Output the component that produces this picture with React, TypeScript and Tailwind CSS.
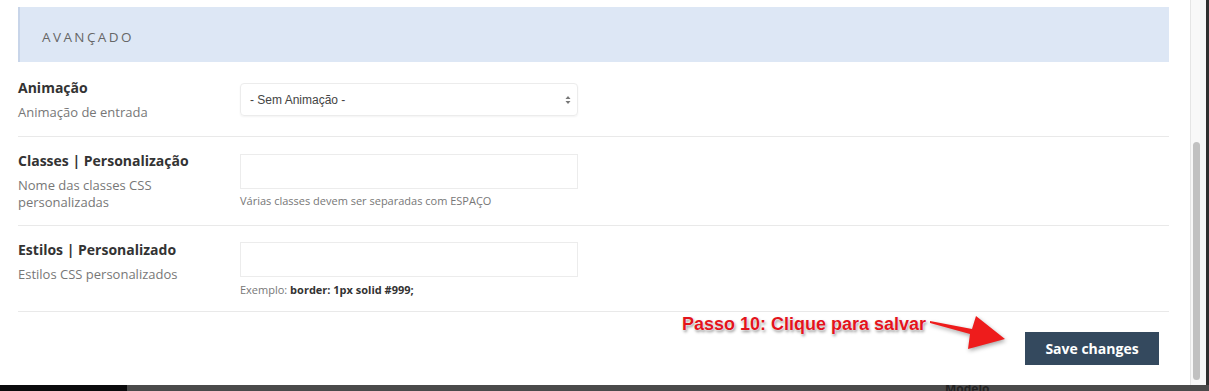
import React from "react";

const Row: React.FC<{
  title: string;
  subtitle: string;
  children: React.ReactNode;
  className?: string;
}> = ({ title, subtitle, children, className }) => (
  <div className={`flex border-b border-[#e9e9e9] ${className ?? ""}`}>
    <div className="w-[222px] pr-[30px] shrink-0">
      <div className="text-[14px] leading-[20px] font-bold text-[#333]">{title}</div>
      <div className="mt-[6px] text-[13px] leading-[17px] text-[#777]">{subtitle}</div>
    </div>
    <div className="flex flex-col">{children}</div>
  </div>
);

const App: React.FC = () => {
  return (
    <div className="w-[1209px] h-[391px] flex flex-col bg-[#4a4a4a] overflow-hidden font-['Open_Sans',sans-serif]">
      <div className="flex h-[385px]">
        {/* Modal body */}
        <div className="w-[1190px] bg-white pl-[18px] pr-[21px] flex flex-col">
          <div className="mt-[7px] h-[55px] flex items-center bg-[#dde7f5] border-l-2 border-[#c8d5e9] pl-[22px] pt-[6px]">
            <span className="text-[13.5px] tracking-[2.4px] text-[#666]">AVANÇADO</span>
          </div>

          <Row title="Animação" subtitle="Animação de entrada" className="h-[75px] pt-[16px]">
            <div className="mt-[5px] w-[338px] h-[33px] flex items-center justify-between pl-[9px] pr-[6px] border border-[#ececec] rounded-[4px] shadow-[0_1px_2px_rgba(0,0,0,0.05)] font-['Liberation_Sans',sans-serif] text-[12px] text-[#444]">
              <span>- Sem Animação -</span>
              <svg width="6" height="10" viewBox="0 0 6 10">
                <path d="M3 1 L5.5 4 H0.5 Z" fill="#777" />
                <path d="M3 9 L5.5 6 H0.5 Z" fill="#777" />
              </svg>
            </div>
          </Row>

          <Row
            title="Classes | Personalização"
            subtitle="Nome das classes CSS personalizadas"
            className="h-[89px] pt-[14px]"
          >
            <div className="mt-[3px] w-[338px] h-[35px] border border-[#ececec]" />
            <div className="mt-[4px] text-[11px] leading-[16px] text-[#777]">
              Várias classes devem ser separadas com ESPAÇO
            </div>
          </Row>

          <Row
            title="Estilos | Personalizado"
            subtitle="Estilos CSS personalizados"
            className="h-[86px] pt-[14px]"
          >
            <div className="mt-[2px] w-[338px] h-[35px] border border-[#ececec]" />
            <div className="mt-[5px] text-[11px] leading-[16px] text-[#777]">
              Exemplo: <b className="text-[#333]">border: 1px solid #999;</b>
            </div>
          </Row>

          <div className="relative flex-1 flex justify-end items-start pt-[20px] pr-[10px]">
            <button className="w-[134px] h-[33px] bg-[#34495e] text-white text-[14px] font-bold">
              Save changes
            </button>

            {/* annotation */}
            <span className="absolute left-[664px] top-[-1px] font-['Liberation_Sans',sans-serif] text-[18px] font-bold text-[#e3141c] whitespace-nowrap [text-shadow:0_0_1px_#fff,0_0_2px_#fff,1px_2px_3px_rgba(0,0,0,0.45)]">
              Passo 10: Clique para salvar
            </span>
            <svg
              className="absolute left-[904px] top-[0px] drop-shadow-[1px_2px_2px_rgba(0,0,0,0.35)]"
              width="90"
              height="42"
              viewBox="0 0 90 42"
            >
              <polygon
                points="8,9 50,17 54,4 83,27 46,37 48,22 8,11"
                fill="#ee1c1c"
              />
            </svg>
          </div>
        </div>

        {/* Scrollbar */}
        <div className="w-[16px] bg-[#f8f8f8] border-l border-[#e5e5e5]">
          <div className="ml-[2px] mt-[142px] w-[7px] h-[238px] rounded-full bg-[#c1c1c1]" />
        </div>
        <div className="flex-1 bg-[#2f2f2f]" />
      </div>

      <div className="flex h-[6px]">
        <div className="w-[127px] bg-[#0b0b0d]" />
        <div className="flex-1 bg-[#4a4a4a] overflow-hidden">
          <div className="ml-[818px] -mt-[3px] text-[12px] leading-[14px] font-bold text-[#222]">Modelo</div>
        </div>
      </div>
    </div>
  );
};

export default App;
